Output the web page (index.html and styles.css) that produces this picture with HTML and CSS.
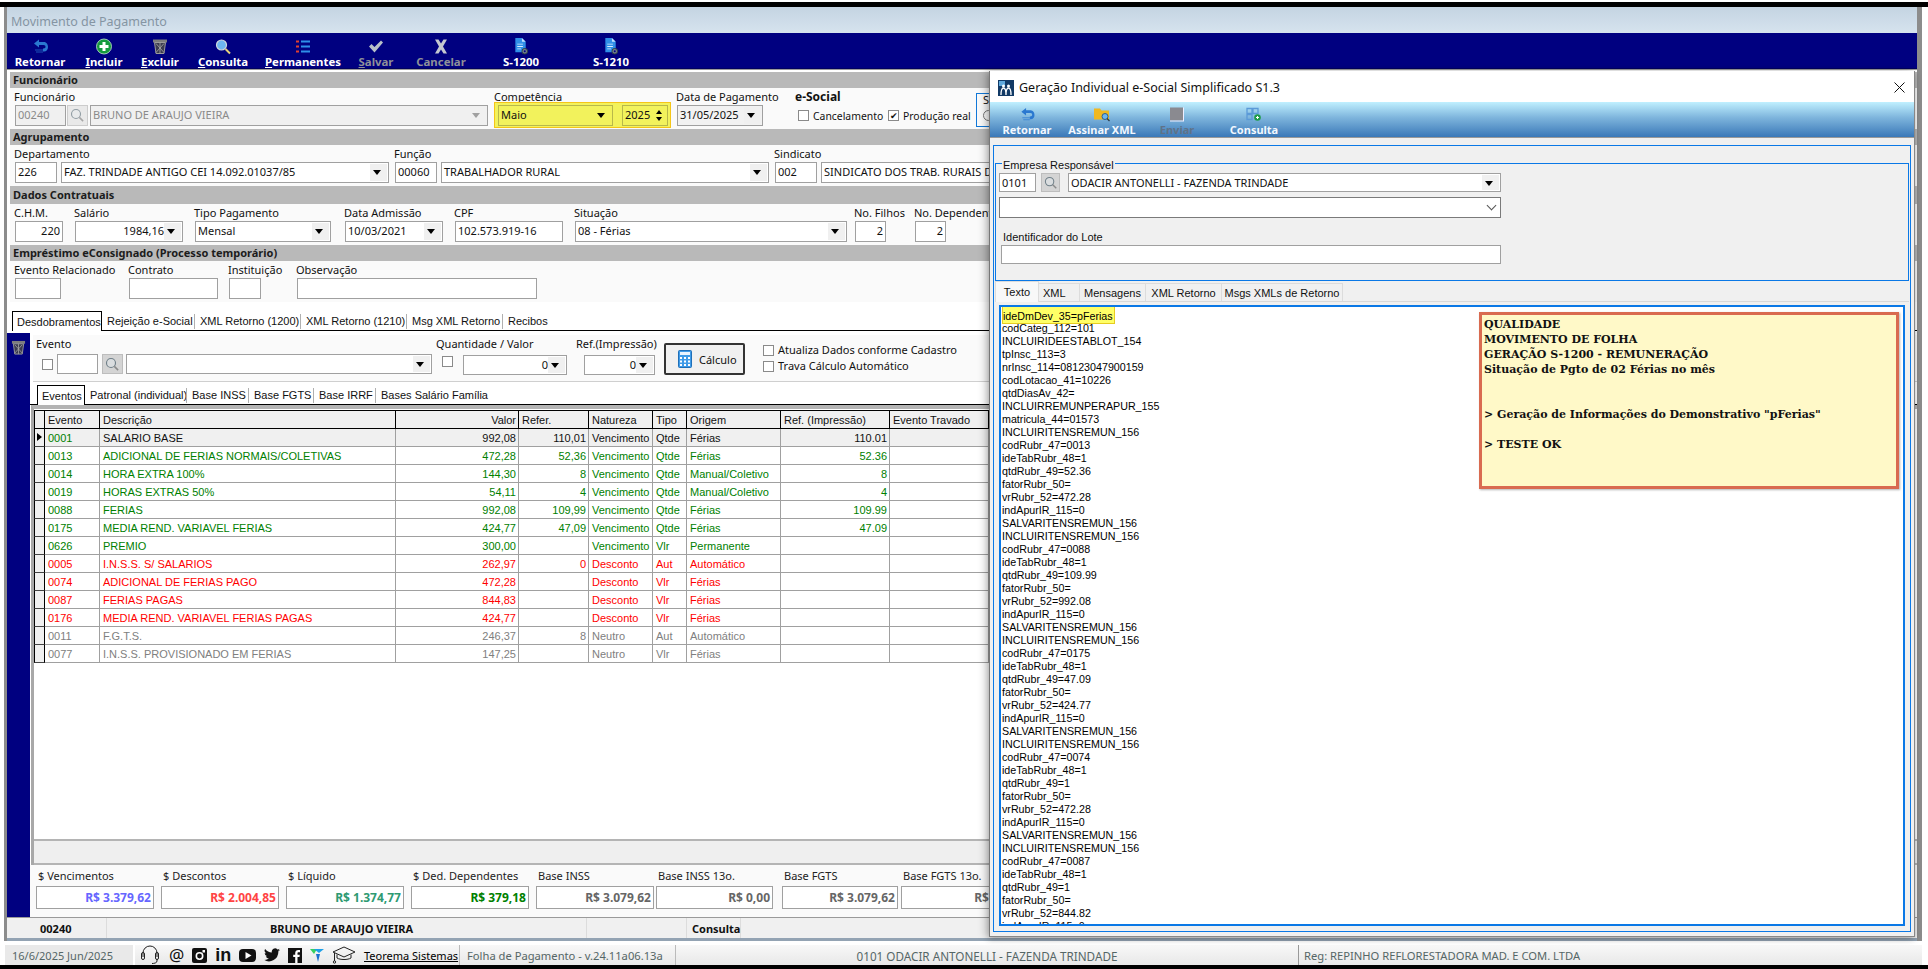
FILE: index.html
```html
<!DOCTYPE html>
<html lang="pt-BR">
<head>
    <meta charset="UTF-8">
    <title>Movimento de Pagamento</title>
    <link rel="stylesheet" href="styles.css">
</head>
<body>

    <!-- icons used more than once -->
    <svg class="defs" width="0" height="0">
        <symbol id="i-back" viewBox="0 0 16 16">
            <path d="M7 1 2 5l5 4V6.500h4.500c1.500 0 2 .8 2 1.800S13 10 11.500 10H11v3h1c2.500 0 4-2 4-4.500S14.500 3.500 12 3.500H7z" fill="#2a78d0"/>
            <path d="M3 11h8v1H3zM4 13h7v1H4z" fill="#2a78d0" opacity=".7"/>
        </symbol>
        <symbol id="i-lens" viewBox="0 0 20 20">
            <circle cx="8" cy="8" r="6" fill="#dfe6ea" fill-opacity=".5" stroke="#6f7f88" stroke-width="1.500"/>
            <path d="m12.500 12.500 5 5" stroke="#8a8a8a" stroke-width="2"/>
        </symbol>
        <symbol id="i-trash" viewBox="0 0 16 16">
            <path d="M1 1h14v3H1z" fill="#7d7d7d"/>
            <path d="M2.500 4h11L12 15H4z" fill="#3c3c50" stroke="#9a9a9a"/>
            <path d="m4 5 8 9M12 5l-8 9M8 4v11" stroke="#a8a8a8" stroke-width=".8"/>
        </symbol>
        <symbol id="i-doc" viewBox="0 0 16 18">
            <path d="M2 0h7l4 4v11H2z" fill="#2f8fe8"/>
            <path d="M9 0l4 4H9z" fill="#bfe0ff"/>
            <path d="M4 6h6v1H4zM4 8.500h6v1H4zM4 11h4v1H4z" fill="#d8ecff"/>
            <circle cx="12" cy="14" r="3" fill="#6d7d8a" stroke="#2c3a46"/>
            <circle cx="12" cy="14" r="1" fill="#000080"/>
        </symbol>
    </svg>

    <div class="blackband"></div>

    <div class="app">
        <div class="apptitle">Movimento de Pagamento</div>

        <div class="toolbar">
            <div class="tbtn w66"><svg class="ico" width="16" height="16"><use href="#i-back"/></svg><span>Retornar</span></div>
            <div class="tbtn w62">
                <svg class="ico" width="16" height="16" viewBox="0 0 16 16"><circle cx="8" cy="8" r="7.500" fill="#159a3e" stroke="#c8e8d0" stroke-width=".8"/><path d="M3.500 6.500h3v-3h3v3h3v3h-3v3h-3v-3h-3z" fill="#fff"/></svg>
                <span><u>I</u>ncluir</span>
            </div>
            <div class="tbtn w50"><svg class="ico" width="16" height="16"><use href="#i-trash"/></svg><span><u>E</u>xcluir</span></div>
            <div class="tbtn w76">
                <svg class="ico" width="16" height="16" viewBox="0 0 16 16"><circle cx="6.500" cy="6.500" r="5" fill="#6db6f0" stroke="#cfd8dc" stroke-width="1.200"/><path d="m10.500 10.500 4.500 4.500" stroke="#e8d27a" stroke-width="2"/></svg>
                <span><u>C</u>onsulta</span>
            </div>
            <div class="tbtn w84">
                <svg class="ico" width="16" height="16" viewBox="0 0 16 16"><path d="M1 2h3v2H1zM1 7h3v2H1zM1 12h3v2H1z" fill="#e04030"/><path d="M6 2h9v2H6zM6 7h9v2H6zM6 12h9v2H6z" fill="#2f8fe8"/></svg>
                <span><u>P</u>ermanentes</span>
            </div>
            <div class="tbtn w62 off">
                <svg class="ico" width="16" height="16" viewBox="0 0 16 16"><path d="m1 8 2.500-2.500 3 3L13 2l2 2-8.500 10z" fill="#b8c0c8"/></svg>
                <span><u>S</u>alvar</span>
            </div>
            <div class="tbtn w68 off">
                <svg class="ico" width="16" height="16" viewBox="0 0 16 16"><path d="M2 1h3.500L8 5l2.500-4H14l-4 7 4 7h-3.500L8 11l-2.500 4H2l4-7z" fill="#c4c8d0"/></svg>
                <span>Cancelar</span>
            </div>
            <div class="tbtn w92"><svg class="ico" width="16" height="18"><use href="#i-doc"/></svg><span>S-1200</span></div>
            <div class="tbtn w88"><svg class="ico" width="16" height="18"><use href="#i-doc"/></svg><span>S-1210</span></div>
        </div>

        <div class="form">
            <div class="sect">Funcionário</div>
            <div class="row">
                <div class="field w51"><label>Funcionário</label><div class="inp dis">00240</div></div>
                <div class="field w21 ml1"><label>&nbsp;</label><div class="lensbtn dis"><svg width="15" height="15"><use href="#i-lens"/></svg></div></div>
                <div class="field w398 ml2"><label>&nbsp;</label><div class="inp dis combo">BRUNO DE ARAUJO VIEIRA<i class="arrow gray"></i></div></div>
                <div class="field w177 ml6">
                    <label class="flush">Competência</label>
                    <div class="hilite">
                        <div class="inp yellow combo w115">Maio<i class="arrow"></i></div>
                        <div class="inp yellow w46 ml9">2025<i class="spin"></i></div>
                    </div>
                </div>
                <div class="field w86 ml6"><label>Data de Pagamento</label><div class="inp soft combo">31/05/2025<i class="arrow"></i></div></div>
                <div class="field w180 ml33">
                    <label class="b">e-Social</label>
                    <div class="checks">
                        <span class="chk"></span><span class="chktxt w68">Cancelamento</span>
                        <span class="chk on">✔</span><span class="chktxt">Produção real</span>
                    </div>
                </div>
                <div class="sgroup"><span>S</span><i class="radio"></i></div>
            </div>

            <div class="sect">Agrupamento</div>
            <div class="row">
                <div class="field w42"><label>Departamento</label><div class="inp">226</div></div>
                <div class="field w328 ml4"><label>&nbsp;</label><div class="inp combo">FAZ. TRINDADE ANTIGO CEI 14.092.01037/85<i class="arrow"></i></div></div>
                <div class="field w42 ml6"><label>Função</label><div class="inp">00060</div></div>
                <div class="field w328 ml4"><label>&nbsp;</label><div class="inp combo">TRABALHADOR RURAL<i class="arrow"></i></div></div>
                <div class="field w42 ml6"><label>Sindicato</label><div class="inp">002</div></div>
                <div class="field w328 ml4"><label>&nbsp;</label><div class="inp combo">SINDICATO DOS TRAB. RURAIS DE<i class="arrow"></i></div></div>
            </div>

            <div class="sect tall">Dados Contratuais</div>
            <div class="row">
                <div class="field w48"><label>C.H.M.</label><div class="inp right">220</div></div>
                <div class="field w108 ml12"><label>Salário</label><div class="inp right combo">1984,16<i class="arrow"></i></div></div>
                <div class="field w136 ml12"><label>Tipo Pagamento</label><div class="inp combo">Mensal<i class="arrow"></i></div></div>
                <div class="field w98 ml14"><label>Data Admissão</label><div class="inp combo">10/03/2021<i class="arrow"></i></div></div>
                <div class="field w108 ml12"><label>CPF</label><div class="inp">102.573.919-16</div></div>
                <div class="field w272 ml12"><label>Situação</label><div class="inp combo">08 - Férias<i class="arrow"></i></div></div>
                <div class="field w31 ml8"><label>No. Filhos</label><div class="inp right">2</div></div>
                <div class="field w31 ml29"><label>No. Dependentes</label><div class="inp right">2</div></div>
            </div>

            <div class="sect">Empréstimo eConsignado (Processo temporário)</div>
            <div class="row">
                <div class="field w46"><label>Evento Relacionado</label><div class="inp"></div></div>
                <div class="field w89 ml68"><label>Contrato</label><div class="inp"></div></div>
                <div class="field w32 ml11"><label>Instituição</label><div class="inp"></div></div>
                <div class="field w240 ml36"><label>Observação</label><div class="inp"></div></div>
            </div>
        </div>

        <div class="tabs outer">
            <div class="tab active w90">Desdobramentos</div>
            <div class="tab w93">Rejeição e-Social</div>
            <div class="tab w106">XML Retorno (1200)</div>
            <div class="tab w106">XML Retorno (1210)</div>
            <div class="tab w96">Msg XML Retorno</div>
            <div class="tab nosep">Recibos</div>
        </div>

        <div class="work">
            <div class="sidebar"><svg width="15" height="15"><use href="#i-trash"/></svg></div>
            <div class="content">
                <div class="evtpanel">
                    <div class="field w395">
                        <label>Evento</label>
                        <div class="evtline">
                            <span class="chk"></span>
                            <div class="inp w41 ml4 h20"></div>
                            <div class="lensbtn ml4 h20"><svg width="15" height="15"><use href="#i-lens"/></svg></div>
                            <div class="inp combo w306 ml3 h20"><i class="arrow"></i></div>
                        </div>
                    </div>
                    <div class="field w130 ml5">
                        <label>Quantidade / Valor</label>
                        <div class="evtline">
                            <span class="chk up"></span>
                            <div class="inp combo right w104 ml10 h20 low">0<i class="arrow"></i></div>
                        </div>
                    </div>
                    <div class="field w78 ml10">
                        <label>Ref.(Impressão)</label>
                        <div class="evtline"><div class="inp combo right w76 ml2 h20 low">0<i class="arrow"></i></div></div>
                    </div>
                    <div class="calc">
                        <svg width="14" height="18" viewBox="0 0 14 18"><rect x=".5" y=".5" width="13" height="17" rx="1" fill="#3f9be8" stroke="#1f6fb8"/><rect x="2" y="2" width="10" height="3" fill="#e8f4ff"/><path d="M2 7h2v2H2zM6 7h2v2H6zM10 7h2v2h-2zM2 10.500h2v2H2zM6 10.500h2v2H6zM10 10.500h2v2h-2zM2 14h2v2H2zM6 14h2v2H6zM10 14h2v2h-2z" fill="#fff"/></svg>
                        <span>Cálculo</span>
                    </div>
                    <div class="calcopts">
                        <div><span class="chk"></span>Atualiza Dados conforme Cadastro</div>
                        <div><span class="chk"></span>Trava Cálculo Automático</div>
                    </div>
                </div>

                <div class="tabs inner">
                    <div class="tab active w48">Eventos</div>
                    <div class="tab w102">Patronal (individual)</div>
                    <div class="tab w62">Base INSS</div>
                    <div class="tab w65">Base FGTS</div>
                    <div class="tab w62">Base IRRF</div>
                    <div class="tab nosep">Bases Salário Família</div>
                </div>

                <div class="gridbox">
                    <div class="gridscroll">
                        <table class="grid">
                            <colgroup>
                                <col class="c-ind"><col class="c-cod"><col class="c-desc"><col class="c-val"><col class="c-ref">
                                <col class="c-nat"><col class="c-tip"><col class="c-ori"><col class="c-imp"><col class="c-trv">
                            </colgroup>
                            <thead>
                                <tr><th></th><th>Evento</th><th>Descrição</th><th class="r">Valor</th><th>Refer.</th><th>Natureza</th><th>Tipo</th><th>Origem</th><th>Ref. (Impressão)</th><th>Evento Travado</th></tr>
                            </thead>
                            <tbody>
                                <tr class="cur"><td class="ind"><i class="mark"></i></td><td class="g">0001</td><td>SALARIO BASE</td><td class="r">992,08</td><td class="r">110,01</td><td>Vencimento</td><td>Qtde</td><td>Férias</td><td class="r">110.01</td><td></td></tr>
                                <tr class="g"><td class="ind"></td><td>0013</td><td>ADICIONAL DE FERIAS NORMAIS/COLETIVAS</td><td class="r">472,28</td><td class="r">52,36</td><td>Vencimento</td><td>Qtde</td><td>Férias</td><td class="r">52.36</td><td></td></tr>
                                <tr class="g"><td class="ind"></td><td>0014</td><td>HORA EXTRA 100%</td><td class="r">144,30</td><td class="r">8</td><td>Vencimento</td><td>Qtde</td><td>Manual/Coletivo</td><td class="r">8</td><td></td></tr>
                                <tr class="g"><td class="ind"></td><td>0019</td><td>HORAS EXTRAS 50%</td><td class="r">54,11</td><td class="r">4</td><td>Vencimento</td><td>Qtde</td><td>Manual/Coletivo</td><td class="r">4</td><td></td></tr>
                                <tr class="g"><td class="ind"></td><td>0088</td><td>FERIAS</td><td class="r">992,08</td><td class="r">109,99</td><td>Vencimento</td><td>Qtde</td><td>Férias</td><td class="r">109.99</td><td></td></tr>
                                <tr class="g"><td class="ind"></td><td>0175</td><td>MEDIA REND. VARIAVEL FERIAS</td><td class="r">424,77</td><td class="r">47,09</td><td>Vencimento</td><td>Qtde</td><td>Férias</td><td class="r">47.09</td><td></td></tr>
                                <tr class="g"><td class="ind"></td><td>0626</td><td>PREMIO</td><td class="r">300,00</td><td class="r"></td><td>Vencimento</td><td>Vlr</td><td>Permanente</td><td class="r"></td><td></td></tr>
                                <tr class="d"><td class="ind"></td><td>0005</td><td>I.N.S.S. S/ SALARIOS</td><td class="r">262,97</td><td class="r">0</td><td>Desconto</td><td>Aut</td><td>Automático</td><td class="r"></td><td></td></tr>
                                <tr class="d"><td class="ind"></td><td>0074</td><td>ADICIONAL DE FERIAS PAGO</td><td class="r">472,28</td><td class="r"></td><td>Desconto</td><td>Vlr</td><td>Férias</td><td class="r"></td><td></td></tr>
                                <tr class="d"><td class="ind"></td><td>0087</td><td>FERIAS PAGAS</td><td class="r">844,83</td><td class="r"></td><td>Desconto</td><td>Vlr</td><td>Férias</td><td class="r"></td><td></td></tr>
                                <tr class="d"><td class="ind"></td><td>0176</td><td>MEDIA REND. VARIAVEL FERIAS PAGAS</td><td class="r">424,77</td><td class="r"></td><td>Desconto</td><td>Vlr</td><td>Férias</td><td class="r"></td><td></td></tr>
                                <tr class="n"><td class="ind"></td><td>0011</td><td>F.G.T.S.</td><td class="r">246,37</td><td class="r">8</td><td>Neutro</td><td>Aut</td><td>Automático</td><td class="r"></td><td></td></tr>
                                <tr class="n"><td class="ind"></td><td>0077</td><td>I.N.S.S. PROVISIONADO EM FERIAS</td><td class="r">147,25</td><td class="r"></td><td>Neutro</td><td>Vlr</td><td>Férias</td><td class="r"></td><td></td></tr>
                            </tbody>
                        </table>
                    </div>
                    <div class="gridfoot"></div>
                </div>

                <div class="totals">
                    <div class="total w118"><label>$ Vencimentos</label><div class="tval tv-blue">R$ 3.379,62</div></div>
                    <div class="total w118 ml7"><label>$ Descontos</label><div class="tval tv-red">R$ 2.004,85</div></div>
                    <div class="total w118 ml7"><label>$ Líquido</label><div class="tval tv-teal">R$ 1.374,77</div></div>
                    <div class="total w118 ml7"><label>$ Ded. Dependentes</label><div class="tval tv-green">R$ 379,18</div></div>
                    <div class="total w118 ml7"><label>Base INSS</label><div class="tval">R$ 3.079,62</div></div>
                    <div class="total w117 ml2"><label>Base INSS 13o.</label><div class="tval">R$ 0,00</div></div>
                    <div class="total w116 ml9"><label>Base FGTS</label><div class="tval">R$ 3.079,62</div></div>
                    <div class="total w118 ml3"><label>Base FGTS 13o.</label><div class="tval">R$ 0,00</div></div>
                </div>
            </div>
        </div>

        <div class="statusrow">
            <div class="st st-cod">00240</div>
            <div class="st st-name">BRUNO DE ARAUJO VIEIRA</div>
            <div class="st st-gap"></div>
            <div class="st st-mode">Consulta</div>
        </div>
    </div>

    <div class="footer">
        <div class="ft ft-date">16/6/2025 Jun/2025</div>
        <div class="ft ft-icons">
            <svg width="22" height="20" viewBox="0 0 22 20" fill="none" stroke="#222"><path d="M4 12V8a7 7 0 0 1 14 0v4"/><rect x="2.500" y="7.500" width="3" height="7" rx="1.500"/><rect x="16.500" y="7.500" width="3" height="7" rx="1.500"/><path d="M18 14v2c0 2-3 2.500-5 2.500"/></svg>
            <span class="at">@</span>
            <svg width="15" height="15" viewBox="0 0 15 15"><rect width="15" height="15" rx="2" fill="#111"/><circle cx="7.500" cy="8" r="3.200" fill="none" stroke="#fff" stroke-width="1.600"/><rect x="10.500" y="2" width="2.500" height="2.500" fill="#fff"/></svg>
            <span class="in">in</span>
            <svg width="17" height="13" viewBox="0 0 17 13"><rect width="17" height="13" rx="4" fill="#111"/><path d="m6.500 3 6 3.500-6 3.500z" fill="#fff"/></svg>
            <svg width="16" height="14" viewBox="0 0 24 20"><path d="M24 2.400a10 10 0 0 1-2.800.8A5 5 0 0 0 23.300.500a9.800 9.800 0 0 1-3.100 1.200 4.900 4.900 0 0 0-8.400 4.500A14 14 0 0 1 1.700.900a4.900 4.900 0 0 0 1.500 6.600 4.900 4.900 0 0 1-2.200-.6 4.900 4.900 0 0 0 3.900 4.900 5 5 0 0 1-2.200.1 4.900 4.900 0 0 0 4.600 3.400A9.900 9.900 0 0 1 0 17.300 14 14 0 0 0 21.500 5l0-.6A10 10 0 0 0 24 2.400z" fill="#111"/></svg>
            <svg width="14" height="15" viewBox="0 0 14 15"><rect width="14" height="15" fill="#111"/><path d="M9.500 15V9H11.500l.3-2.300H9.500V5.300c0-.7.2-1.100 1.100-1.100H12V2.100a14 14 0 0 0-1.800-.1C8.500 2 7.200 3 7.200 5v1.700H5.200V9h2v6z" fill="#fff"/></svg>
            <svg width="14" height="13" viewBox="0 0 14 13"><path d="M0 0h7L4 5z" fill="#38d060"/><path d="M4 0h10L9 4z" fill="#1ea0e8"/><path d="M6 5h4L8 13z" fill="#1c6fd0"/></svg>
            <svg width="24" height="20" viewBox="0 0 24 20" fill="none" stroke="#222"><path d="m1 7 11-5 11 5-11 5z"/><path d="M5 9.500V13c3 2 11 2 14 0V9.500"/><path d="M2.500 8v8"/><circle cx="2.500" cy="17" r="1.200"/></svg>
        </div>
        <div class="ft ft-link">Teorema Sistemas</div>
        <div class="ft ft-ver">Folha de Pagamento - v.24.11a06.13a</div>
        <div class="ft ft-emp">0101 ODACIR ANTONELLI - FAZENDA TRINDADE</div>
        <div class="ft ft-reg">Reg: REPINHO REFLORESTADORA MAD. E COM. LTDA</div>
    </div>

    <!-- dialog on top of the main window -->
    <div class="dialog">
        <div class="dlgtitle">
            <svg width="16" height="16" viewBox="0 0 16 16"><rect width="16" height="16" fill="#123a66"/><rect x="1" y="1" width="6" height="5" fill="#5fa8dc"/><path d="M3 15c0-5 1-7 2.500-7S8 10 8 15M8 15c0-5 1-7 2.500-7S13 10 13 15" fill="none" stroke="#fff" stroke-width="1.300"/><circle cx="5.500" cy="6" r="1.500" fill="#fff"/><circle cx="10.500" cy="6" r="1.500" fill="#fff"/></svg>
            <span>Geração Individual e-Social Simplificado S1.3</span>
            <svg class="close" width="11" height="11" viewBox="0 0 11 11"><path d="m.5.500 10 10M10.500.500l-10 10" stroke="#111"/></svg>
        </div>
        <div class="dlgbar">
            <div class="dbtn w66"><svg width="16" height="14"><use href="#i-back"/></svg><span>Retornar</span></div>
            <div class="dbtn w84">
                <svg width="16" height="14" viewBox="0 0 16 14"><path d="M0 1h6l1.500 2H15v9H0z" fill="#f0b820"/><circle cx="11" cy="9" r="3" fill="#6db6f0" stroke="#2c5f90"/><path d="m13 11 2.500 2.500" stroke="#2c3a46" stroke-width="1.300"/></svg>
                <span>Assinar XML</span>
            </div>
            <div class="dbtn w66 off">
                <svg width="14" height="14" viewBox="0 0 14 14"><rect width="13" height="13" fill="#8a8a90"/><path d="M13 0h1v14H0v-1h13z" fill="#eef"/></svg>
                <span>Enviar</span>
            </div>
            <div class="dbtn w88">
                <svg width="16" height="14" viewBox="0 0 16 14"><path d="M1 1h5v5H1zM7 1h5v5H7zM1 7h5v5H1z" fill="none" stroke="#5b9ad8" stroke-width="1.300"/><circle cx="11.500" cy="10" r="3.300" fill="#1f9c4a"/><path d="M10 10h3M11.500 8.500v3" stroke="#fff"/></svg>
                <span>Consulta</span>
            </div>
        </div>
        <div class="dlgbody">
            <div class="dlgframe">
                <div class="empgroup">
                    <div class="legend">Empresa Responsável</div>
                    <div class="gline">
                        <div class="inp w37 h19">0101</div>
                        <div class="lensbtn w19 ml5 h19"><svg width="14" height="14"><use href="#i-lens"/></svg></div>
                        <div class="inp combo w433 ml8 h19">ODACIR ANTONELLI - FAZENDA TRINDADE<i class="arrow"></i></div>
                    </div>
                    <div class="gline second"><div class="inp combo w502 dark h21"><i class="chev"></i></div></div>
                    <div class="lote">
                        <label>Identificador do Lote</label>
                        <div class="inp w500 h19"></div>
                    </div>
                </div>
                <div class="dtabs">
                    <div class="dtab active w44">Texto</div>
                    <div class="dtab w42 left">XML</div>
                    <div class="dtab w67">Mensagens</div>
                    <div class="dtab w77">XML Retorno</div>
                    <div class="dtab w122">Msgs XMLs de Retorno</div>
                </div>
                <div class="memo">
                    <div class="firstline">ideDmDev_35=pFerias</div>
                    <div>codCateg_112=101</div>
                    <div>INCLUIRIDEESTABLOT_154</div>
                    <div>tpInsc_113=3</div>
                    <div>nrInsc_114=08123047900159</div>
                    <div>codLotacao_41=10226</div>
                    <div>qtdDiasAv_42=</div>
                    <div>INCLUIRREMUNPERAPUR_155</div>
                    <div>matricula_44=01573</div>
                    <div>INCLUIRITENSREMUN_156</div>
                    <div>codRubr_47=0013</div>
                    <div>ideTabRubr_48=1</div>
                    <div>qtdRubr_49=52.36</div>
                    <div>fatorRubr_50=</div>
                    <div>vrRubr_52=472.28</div>
                    <div>indApurIR_115=0</div>
                    <div>SALVARITENSREMUN_156</div>
                    <div>INCLUIRITENSREMUN_156</div>
                    <div>codRubr_47=0088</div>
                    <div>ideTabRubr_48=1</div>
                    <div>qtdRubr_49=109.99</div>
                    <div>fatorRubr_50=</div>
                    <div>vrRubr_52=992.08</div>
                    <div>indApurIR_115=0</div>
                    <div>SALVARITENSREMUN_156</div>
                    <div>INCLUIRITENSREMUN_156</div>
                    <div>codRubr_47=0175</div>
                    <div>ideTabRubr_48=1</div>
                    <div>qtdRubr_49=47.09</div>
                    <div>fatorRubr_50=</div>
                    <div>vrRubr_52=424.77</div>
                    <div>indApurIR_115=0</div>
                    <div>SALVARITENSREMUN_156</div>
                    <div>INCLUIRITENSREMUN_156</div>
                    <div>codRubr_47=0074</div>
                    <div>ideTabRubr_48=1</div>
                    <div>qtdRubr_49=1</div>
                    <div>fatorRubr_50=</div>
                    <div>vrRubr_52=472.28</div>
                    <div>indApurIR_115=0</div>
                    <div>SALVARITENSREMUN_156</div>
                    <div>INCLUIRITENSREMUN_156</div>
                    <div>codRubr_47=0087</div>
                    <div>ideTabRubr_48=1</div>
                    <div>qtdRubr_49=1</div>
                    <div>fatorRubr_50=</div>
                    <div>vrRubr_52=844.82</div>
                    <div>indApurIR_115=0</div>

                    <div class="note">
                        QUALIDADE<br>
                        MOVIMENTO DE FOLHA<br>
                        GERAÇÃO S-1200 - REMUNERAÇÃO<br>
                        Situação de Pgto de 02 Férias no mês<br>
                        <br><br>
                        &gt; Geração de Informações do Demonstrativo "pFerias"<br>
                        <br>
                        &gt; TESTE OK
                    </div>
                </div>
            </div>
        </div>
    </div>

</body>
</html>
```

FILE: styles.css
```css
/* General */
* {
    box-sizing: border-box;
}

html, body {
    margin: 0;
    height: 969px;
    overflow: hidden;
}

body {
    position: relative;
    background: #fff;
    padding-top: 2px;
    font-family: "Noto Sans", "Liberation Sans", sans-serif;
    font-size: 11px;
    color: #111;
}

body::after {
    content: "";
    position: absolute;
    left: 0;
    right: 0;
    top: 965px;
    height: 4px;
    background: #000;
}

.defs {
    position: absolute;
}

label {
    display: block;
    height: 14px;
    line-height: 12px;
    white-space: nowrap;
}

.b { font-weight: bold; font-size: 12px; }

/* Width and margin helpers */
.w19 { width: 19px !important; } .w21 { width: 21px; } .w31 { width: 31px; } .w32 { width: 32px; }
.w37 { width: 37px; } .w41 { width: 41px; } .w42 { width: 42px; } .w44 { width: 44px; }
.w46 { width: 46px; } .w48 { width: 48px; } .w50 { width: 50px; }
.w51 { width: 51px; } .w62 { width: 62px; } .w65 { width: 65px; } .w66 { width: 66px; }
.w67 { width: 67px; } .w68 { width: 68px; } .w76 { width: 76px; } .w77 { width: 77px; } .w78 { width: 78px; }
.w84 { width: 84px; } .w86 { width: 86px; } .w88 { width: 88px; } .w89 { width: 89px; }
.w90 { width: 90px; } .w92 { width: 92px; } .w93 { width: 93px; } .w96 { width: 96px; }
.w98 { width: 98px; } .w102 { width: 102px; } .w104 { width: 104px; } .w106 { width: 106px; }
.w108 { width: 108px; } .w115 { width: 115px; } .w116 { width: 116px; } .w117 { width: 117px; }
.w118 { width: 118px; } .w122 { width: 122px; } .w130 { width: 130px; } .w136 { width: 136px; }
.w177 { width: 177px; } .w180 { width: 180px; } .w240 { width: 240px; } .w272 { width: 272px; }
.w306 { width: 306px; } .w328 { width: 328px; } .w395 { width: 395px; } .w398 { width: 398px; }
.w433 { width: 433px; } .w500 { width: 500px; } .w502 { width: 502px; }

.ml1 { margin-left: 1px; } .ml2 { margin-left: 2px; } .ml3 { margin-left: 3px; } .ml4 { margin-left: 4px; }
.ml5 { margin-left: 5px; } .ml6 { margin-left: 6px; } .ml7 { margin-left: 7px; } .ml8 { margin-left: 8px; }
.ml9 { margin-left: 9px; } .ml10 { margin-left: 10px; } .ml11 { margin-left: 11px; } .ml12 { margin-left: 12px; }
.ml14 { margin-left: 14px; } .ml29 { margin-left: 29px; } .ml33 { margin-left: 33px; } .ml36 { margin-left: 36px; }
.ml68 { margin-left: 68px; }

.h19 { height: 19px !important; } .h20 { height: 20px !important; } .h21 { height: 21px !important; }

/* Top band and main window */
.blackband {
    height: 5px;
    background: #000;
}

.app {
    width: 1918px;
    margin-left: 4px;
    height: 934px;
    border-left: 3px solid #8c8c8c;
    border-right: 5px solid #8c8c8c;
    background: #fff;
    display: flex;
    flex-direction: column;
}

.apptitle {
    height: 26px;
    padding: 7px 0 0 4px;
    background: linear-gradient(#c4d4e2, #d6e3ee);
    color: #8595a3;
    font-size: 12.500px;
    line-height: 16px;
}

.toolbar {
    height: 36px;
    flex: none;
    display: flex;
    background: #000080;
    border-bottom: 1px solid #000060;
}

.tbtn {
    flex: none;
    display: flex;
    flex-direction: column;
    align-items: center;
    color: #fff;
    font-weight: bold;
    font-size: 11.400px;
    padding-top: 5px;
    line-height: 13px;
    white-space: nowrap;
}

.tbtn .ico {
    height: 17px;
}

.tbtn.off {
    color: #8f9198;
}

/* Form sections */
.form {
    padding: 2px 0 0 3px;
    border-top: 1px solid #9a9a9a;
}

.sect {
    height: 16px;
    background: #b9b9b9;
    padding-left: 3px;
    font-weight: bold;
    line-height: 15px;
    color: #1c1c1c;
}

.sect.tall {
    height: 18px;
    line-height: 17px;
}

.row {
    height: 41px;
    background: #fafafa;
    display: flex;
    padding: 3px 0 0 5px;
    white-space: nowrap;
}

.field {
    flex: none;
}

.field label {
    margin-left: -1px;
}

.field label.flush {
    margin-left: 0;
}

.inp {
    position: relative;
    height: 21px;
    line-height: 18px;
    padding: 0 2px;
    border: 1px solid #a0a0a0;
    background: #fff;
    overflow: hidden;
    white-space: nowrap;
}

.inp.dis {
    background: #f0f0f0;
    color: #8a8a8a;
}

.inp.soft {
    background: #f2f2f2;
}

.inp.right {
    text-align: right;
}

.inp.combo.right {
    padding-right: 18px;
}

.inp.dark {
    border-color: #7a7a7a;
}

.arrow {
    position: absolute;
    right: 0;
    top: 0;
    bottom: 0;
    width: 17px;
    background: #f0f0f0;
    margin: 1px;
}

.arrow::after {
    content: "";
    position: absolute;
    left: 3px;
    top: 6px;
    border: 4.500px solid transparent;
    border-top: 5px solid #000;
    border-bottom: 0;
}

.arrow.gray::after {
    border-top-color: #a0a0a0;
}

.yellow .arrow {
    background: transparent;
}

.spin {
    position: absolute;
    right: 4px;
    top: 4px;
    width: 7px;
    height: 11px;
}

.spin::before, .spin::after {
    content: "";
    position: absolute;
    left: 0;
    border: 3.500px solid transparent;
}

.spin::before {
    top: 0;
    border-bottom: 4px solid #000;
    border-top: 0;
}

.spin::after {
    bottom: 0;
    border-top: 4px solid #000;
    border-bottom: 0;
}

.chev {
    position: absolute;
    right: 5px;
    top: 4px;
    width: 7px;
    height: 7px;
    border-right: 1px solid #555;
    border-bottom: 1px solid #555;
    transform: rotate(45deg);
}

.lensbtn {
    height: 21px;
    display: flex;
    align-items: center;
    justify-content: center;
    background: #d4d4d4;
    border: 1px solid #bdbdbd;
    width: 21px;
    flex: none;
}

.lensbtn.dis {
    background: #e4e4e4;
    opacity: .75;
}

.hilite {
    display: flex;
    align-items: center;
    height: 26px;
    margin-top: -3px;
    padding: 0 3px;
    background: #f2f25c;
    border: 1.500px solid #f5c518;
    position: relative;
}

.hilite .inp {
    background: #f2f25c;
    border-color: #b8b84a;
    height: 21px;
    flex: none;
}

.checks {
    display: flex;
    align-items: center;
    height: 21px;
    padding-left: 2px;
}

.chk {
    display: inline-block;
    flex: none;
    width: 11px;
    height: 11px;
    border: 1px solid #8a8a8a;
    background: #fff;
    text-align: center;
    font-size: 9px;
    line-height: 9px;
}

.chk.up {
    margin-bottom: 6px;
}

.chktxt {
    margin: 0 7px 0 4px;
    font-size: 10.400px;
}

.sgroup {
    flex: none;
    width: 40px;
    height: 34px;
    margin: 2px 0 0 0;
    padding-left: 6px;
    border: 1px solid #1278d8;
    line-height: 12px;
}

.radio {
    display: block;
    width: 11px;
    height: 11px;
    margin-top: 4px;
    border: 1px solid #777;
    border-radius: 50%;
}

/* Tabs of the main window */
.tabs {
    display: flex;
    border-bottom: 1px solid #000;
    height: 20px;
    flex: none;
    font-family: "Liberation Sans", sans-serif;
}

.tabs.outer {
    margin: 9px 0 2px 5px;
}

.tabs.inner {
    margin-top: 3px;
    padding-left: 7px;
}

.tab {
    flex: none;
    padding-left: 5px;
    height: 19px;
    line-height: 21px;
    position: relative;
    white-space: nowrap;
}

.tab::after {
    content: "";
    position: absolute;
    right: 0;
    top: 3px;
    bottom: 1px;
    width: 1px;
    background: #b0b0b0;
}

.tab.nosep::after, .tab.active::after {
    display: none;
}

.tab.active {
    height: 20px;
    border: 1px solid #000;
    border-bottom: 0;
    background: #fff;
    padding-left: 4px;
}

/* Work area */
.work {
    display: flex;
    flex: 1;
    min-height: 0;
}

.sidebar {
    flex: none;
    width: 23px;
    background: #000080;
    padding: 7px 0 0 4px;
}

.content {
    flex: 1;
    min-width: 0;
    display: flex;
    flex-direction: column;
}

.evtpanel {
    flex: none;
    height: 47px;
    display: flex;
    margin: 2px 0 0 3px;
    padding: 3px 0 0 4px;
    background: #fafafa;
    border-bottom: 1px solid #cfcfcf;
    white-space: nowrap;
}

.evtline {
    display: flex;
    align-items: center;
    height: 24px;
    padding-left: 5px;
}

.low {
    margin-top: 2px;
}

.calc {
    flex: none;
    width: 81px;
    height: 32px;
    margin: 5px 0 0 9px;
    border: 2px solid #333;
    border-radius: 2px;
    background: #f0f0f0;
    display: flex;
    align-items: center;
    padding-left: 12px;
    gap: 7px;
}

.calcopts {
    margin: 4px 0 0 18px;
    line-height: 16px;
}

.calcopts .chk {
    margin-right: 4px;
    vertical-align: -2px;
}

/* Events grid */
.gridbox {
    flex: 1;
    min-height: 0;
    display: flex;
    flex-direction: column;
    margin-left: 1px;
    border-left: 3px solid #a8a8a8;
    border-top: 4px solid #b4b4b4;
}

.gridscroll {
    flex: 1;
    min-height: 0;
    background: #fff;
    padding-top: 1px;
}

.grid {
    width: 955px;
    table-layout: fixed;
    border-collapse: separate;
    border-spacing: 0;
    font-family: "Liberation Sans", sans-serif;
    line-height: 14px;
}

.c-ind { width: 11px; } .c-cod { width: 55px; } .c-desc { width: 296px; } .c-val { width: 123px; }
.c-ref { width: 70px; } .c-nat { width: 64px; } .c-tip { width: 34px; } .c-ori { width: 94px; }
.c-imp { width: 109px; } .c-trv { width: 99px; }

.grid th {
    height: 19px;
    font-weight: normal;
    text-align: left;
    background: #f0f0f0;
    padding: 0 2px 0 3px;
    border-top: 1px solid #000;
    border-bottom: 1px solid #000;
    border-right: 1px solid #000;
}

.grid th:first-child {
    border-left: 1px solid #000;
}

.grid th.r, .grid td.r {
    text-align: right;
}

.grid td {
    height: 18px;
    padding: 0 2px 0 3px;
    border-bottom: 1px solid #a0a0a0;
    border-right: 1px solid #a0a0a0;
    white-space: nowrap;
    overflow: hidden;
}

.grid td.ind {
    position: relative;
    background: #f0f0f0;
    border-left: 1px solid #000;
    border-right: 1px solid #000;
    border-bottom-color: #444;
    padding: 0;
}

.mark {
    position: absolute;
    left: 2px;
    top: 4px;
    border: 4.500px solid transparent;
    border-left: 5px solid #000;
    border-right: 0;
}

.cur td { background: #f0f0f0; }
.g, .g td { color: #008000; }
.d td { color: #f00; }
.n td { color: #808080; }

.gridfoot {
    flex: none;
    height: 26px;
    background: #efefef;
    border-top: 2px solid #b4b4b4;
    border-bottom: 2px solid #b4b4b4;
}

/* Totals */
.totals {
    flex: none;
    height: 52px;
    display: flex;
    background: #fafafa;
    padding: 4px 0 0 6px;
    white-space: nowrap;
}

.total {
    flex: none;
}

.total label {
    margin: 0 0 3px 2px;
    line-height: 14px;
    color: #222;
}

.tval {
    height: 23px;
    line-height: 21px;
    padding-right: 2px;
    border: 1px solid #a0a0a0;
    background: #fff;
    text-align: right;
    font-weight: bold;
    font-size: 12px;
    color: #666;
}

.tv-blue { color: #6666ff; }
.tv-red { color: #ff4444; }
.tv-teal { color: #2e9a72; }
.tv-green { color: #008000; }

/* Status rows */
.statusrow {
    flex: none;
    height: 24px;
    display: flex;
    background: #f0f0f0;
    border-top: 1px solid #9a9a9a;
    border-bottom: 3px solid #93a3b3;
    font-weight: bold;
    line-height: 22px;
}

.st { flex: none; border-right: 1px solid #dcdcdc; }
.st-cod { width: 100px; padding-left: 33px; }
.st-name { width: 480px; padding-right: 10px; text-align: center; }
.st-gap { width: 100px; }
.st-mode { padding-left: 5px; }

.footer {
    height: 20px;
    margin: 4px 6px 0 5px;
    display: flex;
    background: linear-gradient(#f8f8f8, #e8e8e8);
    line-height: 22px;
    color: #566;
    white-space: nowrap;
}

.ft { flex: none; }

.ft-date {
    width: 130px;
    padding-left: 7px;
    background: #e9e9e9;
    border-right: 2px solid #fff;
}

.ft-icons {
    width: 229px;
    display: flex;
    align-items: center;
    gap: 8px;
    padding-left: 4px;
    color: #111;
}

.at {
    font-size: 17px;
}

.in {
    font-family: "Liberation Sans", sans-serif;
    font-weight: bold;
    font-size: 18px;
}

.ft-link {
    width: 96px;
    color: #000;
    text-decoration: underline;
    border-right: 1px solid #bbb;
}

.ft-ver {
    width: 216px;
    padding-left: 7px;
    font-size: 11.200px;
    border-right: 1px solid #bbb;
}

.ft-emp {
    width: 623px;
    text-align: center;
    font-size: 11.700px;
    border-right: 1px solid #999;
}

.ft-reg {
    padding-left: 5px;
    font-size: 11.200px;
}

/* Dialog */
.dialog {
    position: absolute;
    left: 989px;
    top: 71px;
    width: 926px;
    height: 866px;
    display: flex;
    flex-direction: column;
    background: #f0f0f0;
    border-left: 1px solid #777;
    border-right: 1px solid #888;
    border-bottom: 1px solid #888;
    box-shadow: -4px 0 8px rgba(0, 0, 0, .18), 0 2px 6px rgba(0, 0, 0, .25);
}

.dlgtitle {
    flex: none;
    height: 31px;
    background: #fff;
    display: flex;
    align-items: center;
    gap: 5px;
    padding: 2px 0 0 8px;
    font-size: 12.500px;
}

.close {
    margin-left: auto;
    margin-right: 9px;
}

.dlgbar {
    flex: none;
    height: 36px;
    display: flex;
    padding-left: 4px;
    background: linear-gradient(#c0f0ff, #7db4dc 45%, #3a78b8);
    border-bottom: 1px solid #999;
}

.dbtn {
    flex: none;
    display: flex;
    flex-direction: column;
    align-items: center;
    padding-top: 5px;
    line-height: 14px;
    font-weight: bold;
    color: #f2f8ff;
    white-space: nowrap;
}

.dbtn svg {
    height: 15px;
    margin-bottom: 1px;
}

.dbtn.off {
    color: #5f7288;
}

.dlgbody {
    flex: 1;
    min-height: 0;
    padding: 7px 3px 4px 3px;
}

.dlgframe {
    height: 100%;
    border: 1px solid #0a78e6;
    padding: 17px 1px 0 1px;
    display: flex;
    flex-direction: column;
}

.empgroup {
    flex: none;
    height: 118px;
    border: 1px solid #0a78e6;
    padding-left: 3px;
}

.legend {
    width: max-content;
    height: 14px;
    line-height: 17px;
    margin: -7px 0 0 3px;
    padding: 0 1px;
    background: #f0f0f0;
    font-family: "Liberation Sans", sans-serif;
}

.gline {
    display: flex;
    margin-top: 2px;
}

.gline.second {
    margin-top: 5px;
}

.lote {
    margin: 13px 0 0 2px;
}

.lote label {
    margin-left: 2px;
    font-family: "Liberation Sans", sans-serif;
}

.dtabs {
    flex: none;
    display: flex;
    align-items: flex-end;
    height: 21px;
    border-bottom: 1px solid #d8d8d8;
    font-family: "Liberation Sans", sans-serif;
}

.dtab {
    flex: none;
    height: 18px;
    line-height: 18px;
    text-align: center;
    background: #f0f0f0;
    border: 1px solid #dcdcdc;
    border-bottom: 0;
    margin-left: -1px;
}

.dtab.left {
    text-align: left;
    padding-left: 4px;
}

.dtab.active {
    height: 21px;
    margin-left: 0;
    background: #f8f8f8;
    line-height: 20px;
    margin-bottom: -1px;
}

.memo {
    position: relative;
    flex: 1;
    min-height: 0;
    margin: 3px 4px 5px 4px;
    padding: 2px 0 0 1px;
    border: 2px solid #0a78e6;
    background: #fff;
    overflow: hidden;
    font-family: "Liberation Sans", sans-serif;
    font-size: 10.700px;
    line-height: 13px;
    color: #000;
}

.firstline {
    width: 113px;
    height: 18px;
    margin: -3px 0 -2px 0;
    padding: 3px 0 0 0;
    background: #ffff66;
    border: 1px solid #e6cc20;
}

.note {
    position: absolute;
    top: 5px;
    right: 4px;
    width: 420px;
    height: 177px;
    padding: 2px;
    background: #fff9c8;
    border: 3px solid #d96b50;
    box-shadow: 1px 1px 2px rgba(0, 0, 0, .3);
    font-family: "DejaVu Serif", serif;
    font-weight: bold;
    font-size: 11px;
    line-height: 15px;
    color: #111;
}
```
